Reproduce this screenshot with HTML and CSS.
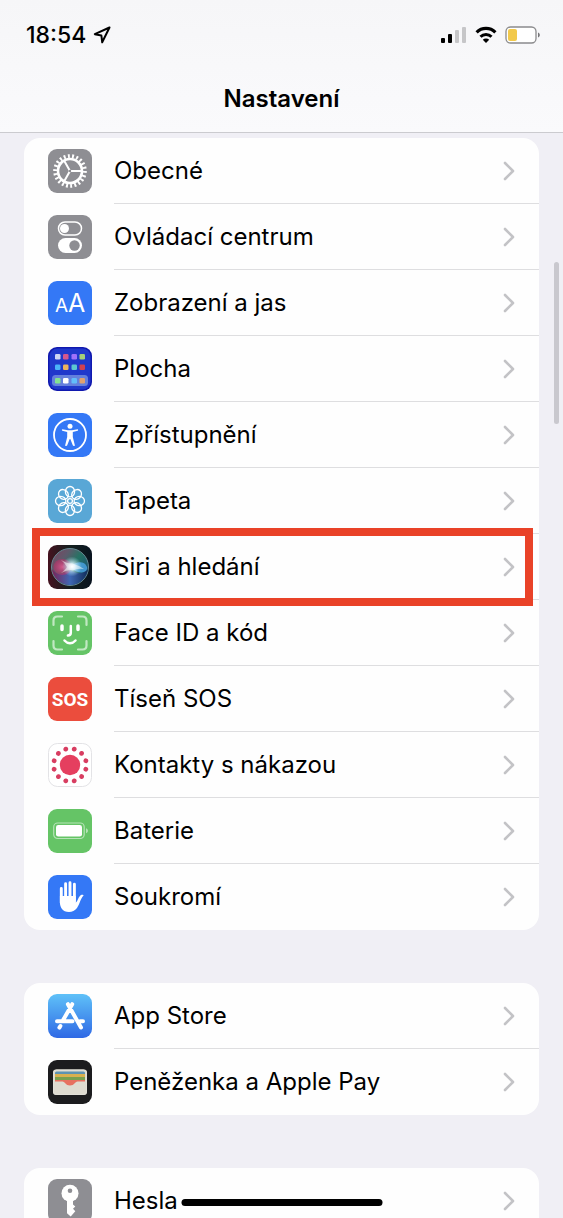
FILE: index.html
```html
<!DOCTYPE html>
<html lang="cs">
<head>
    <meta charset="UTF-8">
    <meta name="viewport" content="width=device-width, initial-scale=1.0">
    <title>Nastavení</title>
    <link rel="stylesheet" href="styles.css">
</head>
<body>
    <svg class="defs" aria-hidden="true">
        <symbol id="chevron" viewBox="0 0 12 20">
            <path d="M2 2l8 8-8 8" fill="none" stroke="#c3c3c6" stroke-width="2.6" stroke-linecap="round" stroke-linejoin="round"/>
        </symbol>
    </svg>

    <header class="header">
        <div class="status-bar">
            <div class="status-left">
                <span class="time">18:54</span>
                <svg width="18" height="18" viewBox="0 0 18 18">
                    <path d="M16.5 1.5L1.8 8.2l6.6 1.3.8 6.8z" fill="none" stroke="#000" stroke-width="2" stroke-linejoin="round"/>
                </svg>
            </div>
            <div class="status-right">
                <svg width="26" height="18" viewBox="0 0 26 18">
                    <rect x="0" y="12" width="4" height="5" rx="1"/>
                    <rect x="7" y="8" width="4" height="9" rx="1"/>
                    <rect x="14" y="4" width="4" height="13" rx="1" fill="#c6c6c8"/>
                    <rect x="21" y="1" width="4" height="16" rx="1" fill="#c6c6c8"/>
                </svg>
                <svg width="22" height="18" viewBox="0 0 22 18">
                    <path d="M1.6 6.3a13.4 13.4 0 0 1 18.8 0" fill="none" stroke="#000" stroke-width="3.2"/>
                    <path d="M5.5 10.8a7.8 7.8 0 0 1 11 0" fill="none" stroke="#000" stroke-width="3"/>
                    <path d="M11 17l-3.2-3.200a4.500 4.500 0 0 1 6.400 0z"/>
                </svg>
                <svg width="36" height="18" viewBox="0 0 36 18">
                    <rect x="1" y="1" width="30" height="16" rx="4.5" fill="#fff" stroke="#8b8b8d" stroke-width="1.3"/>
                    <rect x="3" y="3" width="9" height="12" rx="2" fill="#f2c94b"/>
                    <path d="M33 6.500c2.400.8 2.400 4.200 0 5z" fill="#77777a"/>
                </svg>
            </div>
        </div>
        <h1>Nastavení</h1>
    </header>

    <main class="content">
        <nav class="card">
            <a class="row" href="#obecne">
                <svg class="icon" viewBox="0 0 44 44">
                    <rect width="44" height="44" rx="9" fill="#8e8e93"/>
                    <g fill="none" stroke="#fff">
                        <circle cx="22" cy="22" r="12" stroke-width="2.6"/>
                        <circle cx="22" cy="22" r="14.8" stroke-width="4" pathLength="44" stroke-dasharray=".9 1.100"/>
                        <path d="M22 22h11M22 22l-5.800-10.200M22 22l-5.800 10.200" stroke-width="2"/>
                    </g>
                    <circle cx="22" cy="22" r="1.2" fill="#8e8e93"/>
                </svg>
                <span class="label">Obecné <svg class="chevron"><use href="#chevron"/></svg></span>
            </a>
            <a class="row" href="#ovladaci-centrum">
                <svg class="icon" viewBox="0 0 44 44">
                    <rect width="44" height="44" rx="9" fill="#8e8e93"/>
                    <rect x="10.500" y="7" width="23" height="13" rx="6.500" fill="none" stroke="#fff" stroke-width="1.500"/>
                    <circle cx="16.500" cy="13.500" r="4.500" fill="#fff"/>
                    <rect x="10" y="23" width="24" height="15" rx="7.500" fill="#fff"/>
                    <circle cx="26.500" cy="30.500" r="5.200" fill="#8e8e93"/>
                </svg>
                <span class="label">Ovládací centrum <svg class="chevron"><use href="#chevron"/></svg></span>
            </a>
            <a class="row" href="#zobrazeni">
                <svg class="icon" viewBox="0 0 44 44">
                    <rect width="44" height="44" rx="9" fill="#3478f6"/>
                    <text class="icon-aa" x="7" y="31" font-size="19">A</text>
                    <text class="icon-aa" x="20" y="31" font-size="25">A</text>
                </svg>
                <span class="label">Zobrazení a jas <svg class="chevron"><use href="#chevron"/></svg></span>
            </a>
            <a class="row" href="#plocha">
                <svg class="icon" viewBox="0 0 44 44">
                    <rect width="44" height="44" rx="9" fill="#1018ae"/>
                    <rect x="1.5" y="1.5" width="41" height="41" rx="8" fill="#2038cb"/>
                    <rect x="4" y="28" width="36" height="11" rx="3.500" fill="#6580dc"/>
                    <rect x="7" y="7" width="5.5" height="5.5" rx="1.300" fill="#ced5f3"/>
                    <rect x="15" y="7" width="5.5" height="5.5" rx="1.300" fill="#d5588e"/>
                    <rect x="23.500" y="7" width="5.5" height="5.5" rx="1.300" fill="#a071fa"/>
                    <rect x="31.5" y="7" width="5.5" height="5.5" rx="1.300" fill="#a5cf79"/>
                    <rect x="7" y="17.500" width="5.5" height="5.5" rx="1.300" fill="#4bb3f8"/>
                    <rect x="15" y="17.500" width="5.5" height="5.5" rx="1.300" fill="#edb35e"/>
                    <rect x="23.500" y="17.500" width="5.5" height="5.5" rx="1.300" fill="#5cc7d1"/>
                    <rect x="31.5" y="17.500" width="5.5" height="5.5" rx="1.300" fill="#d34150"/>
                    <rect x="7" y="31" width="5.5" height="5.5" rx="1.300" fill="#83e490"/>
                    <rect x="15" y="31" width="5.5" height="5.5" rx="1.300" fill="#fff"/>
                    <rect x="23.500" y="31" width="5.5" height="5.5" rx="1.300" fill="#62bdfa"/>
                    <rect x="31.5" y="31" width="5.5" height="5.5" rx="1.300" fill="#e0a16e"/>
                </svg>
                <span class="label">Plocha <svg class="chevron"><use href="#chevron"/></svg></span>
            </a>
            <a class="row" href="#zpristupneni">
                <svg class="icon" viewBox="0 0 44 44">
                    <rect width="44" height="44" rx="9" fill="#3478f6"/>
                    <circle cx="22" cy="22" r="16" fill="none" stroke="#fff" stroke-width="1.800"/>
                    <circle cx="22" cy="13.300" r="2.500" fill="#fff"/>
                    <path d="M14.300 16.200l5.700 1h4l5.700-1q1 .8 0 1.600l-4.900 1.300v5l2.100 8.300q-1 1.200-2 .2L22.300 26h-.6l-2.600 6.600q-1 1-2-.2l2.100-8.300v-5l-4.900-1.300q-1-.8 0-1.600z" fill="#fff"/>
                </svg>
                <span class="label">Zpřístupnění <svg class="chevron"><use href="#chevron"/></svg></span>
            </a>
            <a class="row" href="#tapeta">
                <svg class="icon" viewBox="0 0 44 44">
                    <rect width="44" height="44" rx="9" fill="#59a7d6"/>
                    <g fill="none" stroke="#fff" stroke-width="1.300">
                        <g id="petals">
                            <ellipse cx="22" cy="12.700" rx="4.600" ry="5.200"/>
                            <ellipse cx="22" cy="31.300" rx="4.600" ry="5.200"/>
                            <ellipse cx="12.700" cy="22" rx="5.200" ry="4.600"/>
                            <ellipse cx="31.300" cy="22" rx="5.200" ry="4.600"/>
                        </g>
                        <use href="#petals" transform="rotate(45 22 22)"/>
                        <circle cx="22" cy="22" r="2.400"/>
                    </g>
                </svg>
                <span class="label">Tapeta <svg class="chevron"><use href="#chevron"/></svg></span>
            </a>
            <a class="row highlighted" href="#siri">
                <svg class="icon" viewBox="0 0 44 44">
                    <defs>
                        <linearGradient id="siri-bg" x1="0" y1="0" x2="1" y2="0">
                            <stop offset="0" stop-color="#45121f"/>
                            <stop offset=".5" stop-color="#14201f"/>
                            <stop offset="1" stop-color="#08131f"/>
                        </linearGradient>
                        <linearGradient id="siri-orb" x1="0" y1=".1" x2="1" y2=".8">
                            <stop offset="0" stop-color="#7c4460"/>
                            <stop offset=".3" stop-color="#5d5a6b"/>
                            <stop offset=".55" stop-color="#267364"/>
                            <stop offset="1" stop-color="#174878"/>
                        </linearGradient>
                        <radialGradient id="siri-pink">
                            <stop offset="0" stop-color="#d5588c"/>
                            <stop offset="1" stop-color="#c22b67" stop-opacity=".5"/>
                        </radialGradient>
                        <radialGradient id="siri-glow">
                            <stop offset="0" stop-color="#fff"/>
                            <stop offset=".3" stop-color="#e5f7ff" stop-opacity=".85"/>
                            <stop offset="1" stop-color="#9bd7e8" stop-opacity="0"/>
                        </radialGradient>
                        <linearGradient id="siri-low" x1="0" y1="0" x2="1" y2="0">
                            <stop offset="0" stop-color="#7b2357"/>
                            <stop offset=".5" stop-color="#3f68b4"/>
                            <stop offset="1" stop-color="#102c58"/>
                        </linearGradient>
                    </defs>
                    <rect width="44" height="44" rx="9" fill="url(#siri-bg)"/>
                    <circle cx="22" cy="22" r="18.500" fill="url(#siri-orb)" stroke="#668993" stroke-width="1"/>
                    <path d="M4 24c6 8 12 5 18 1 6 3 12 6 18-1-1 9-9 16-18 16S5 33 4 24z" fill="url(#siri-low)"/>
                    <ellipse cx="14.500" cy="22" rx="9" ry="8" fill="url(#siri-pink)"/>
                    <path d="M23 21c5-4 13-6 16 1 1 6-8 8-16 1z" fill="#4fa9ed" opacity=".75"/>
                    <circle cx="24" cy="21.500" r="10" fill="url(#siri-glow)"/>
                    <path d="M13 15q7 4 11 3.500 6 1.500 12 5.500-7-1-11 1.500-4-1.500-12 2.500 5-4 6-6-2-4-6-7z" fill="#fff" opacity=".5"/>
                </svg>
                <span class="label">Siri a hledání <svg class="chevron"><use href="#chevron"/></svg></span>
            </a>
            <a class="row" href="#face-id">
                <svg class="icon" viewBox="0 0 44 44">
                    <rect width="44" height="44" rx="9" fill="#65c466"/>
                    <g fill="none" stroke-linecap="round">
                        <path d="M5.500 14v-4.500q0-4 4-4H14M30 5.500h4.500q4 0 4 4V14M38.500 30v4.500q0 4-4 4H30M14 38.500H9.500q-4 0-4-4V30" stroke="#c1e8c2" stroke-width="2.200"/>
                        <path d="M14 15v3.500M30 15v3.500" stroke="#fff" stroke-width="3.500"/>
                        <path d="M22.800 15v6.800q0 2.700-2.900 2.700M16.500 29.500c3 3.500 8 3.500 11 0" stroke="#fff" stroke-width="2.500"/>
                    </g>
                </svg>
                <span class="label">Face ID a kód <svg class="chevron"><use href="#chevron"/></svg></span>
            </a>
            <a class="row" href="#sos">
                <svg class="icon" viewBox="0 0 44 44">
                    <rect width="44" height="44" rx="9" fill="#eb4d3d"/>
                    <text class="icon-sos" x="22" y="29" text-anchor="middle">SOS</text>
                </svg>
                <span class="label">Tíseň SOS <svg class="chevron"><use href="#chevron"/></svg></span>
            </a>
            <a class="row" href="#kontakty">
                <svg class="icon" viewBox="0 0 44 44">
                    <rect x=".5" y=".5" width="43" height="43" rx="9" fill="#fff" stroke="#e3e3e6"/>
                    <circle cx="22" cy="22" r="10.200" fill="#e53f5f"/>
                    <circle cx="22" cy="22" r="16.400" fill="none" stroke="#d83d61" stroke-width="4.800" stroke-linecap="round" pathLength="12" stroke-dasharray="0 1" transform="rotate(15 22 22)"/>
                </svg>
                <span class="label">Kontakty s nákazou <svg class="chevron"><use href="#chevron"/></svg></span>
            </a>
            <a class="row" href="#baterie">
                <svg class="icon" viewBox="0 0 44 44">
                    <rect width="44" height="44" rx="9" fill="#65c466"/>
                    <rect x="5.700" y="14" width="30.500" height="15.500" rx="4" fill="none" stroke="#b5e3b6" stroke-width="1.200"/>
                    <rect x="8" y="16" width="26" height="11.500" rx="2.300" fill="#fff"/>
                    <path d="M38 19.300c2.600.8 2.600 4.200 0 5z" fill="#b5e3b6"/>
                </svg>
                <span class="label">Baterie <svg class="chevron"><use href="#chevron"/></svg></span>
            </a>
            <a class="row" href="#soukromi">
                <svg class="icon" viewBox="0 0 44 44">
                    <rect width="44" height="44" rx="9" fill="#3478f6"/>
                    <path d="M13.300 13.500V28M17.600 8.700V25M22 7.700V25M26.400 9.200V26" stroke="#fff" stroke-width="2.900" stroke-linecap="round"/>
                    <path d="M11.900 21h15.900v6.500c1.800-.5 2.600-6.200 5.200-7.500 1.300-.5 2.500-.3 2.600.6-3.300 3-3.600 8.400-6.600 12.400-2.200 2.800-4.800 4-8 4-6.500 0-9.100-4.600-9.100-10z" fill="#fff"/>
                </svg>
                <span class="label">Soukromí <svg class="chevron"><use href="#chevron"/></svg></span>
            </a>
        </nav>

        <nav class="card">
            <a class="row" href="#app-store">
                <svg class="icon" viewBox="0 0 44 44">
                    <defs>
                        <linearGradient id="store-bg" x1="0" y1="0" x2="0" y2="1">
                            <stop offset="0" stop-color="#5fc1f8"/>
                            <stop offset="1" stop-color="#2f69e5"/>
                        </linearGradient>
                    </defs>
                    <rect width="44" height="44" rx="9" fill="url(#store-bg)"/>
                    <g fill="none" stroke="#fff" stroke-width="4" stroke-linecap="round">
                        <path d="M9 27.300h15.500M32 27.300h3M24.200 10.200l-9.500 16.600M19.900 10.200L33 33.500M12.400 32l-1 1.600"/>
                    </g>
                </svg>
                <span class="label">App Store <svg class="chevron"><use href="#chevron"/></svg></span>
            </a>
            <a class="row" href="#penezenka">
                <svg class="icon" viewBox="0 0 44 44">
                    <rect width="44" height="44" rx="9" fill="#1c1c1e"/>
                    <rect x="5" y="9.500" width="34" height="25.500" rx="3" fill="#dedbd0"/>
                    <path d="M7 14.500v-1.500q0-1.500 1.500-1.500h27q1.500 0 1.500 1.500v1.500z" fill="#5d93b2"/>
                    <rect x="7" y="14" width="30" height="3" fill="#d9b04f"/>
                    <rect x="7" y="17" width="30" height="3.500" fill="#79a04f"/>
                    <path d="M7 20h30v1.500h-7.500c-2.500 0-3 4-7.500 4s-5-4-7.500-4H7z" fill="#e7705f"/>
                    <rect x="5.500" y="10" width="33" height="24.500" rx="3" fill="none" stroke="#e2e0d8"/>
                </svg>
                <span class="label">Peněženka a Apple Pay <svg class="chevron"><use href="#chevron"/></svg></span>
            </a>
        </nav>

        <nav class="card">
            <a class="row" href="#hesla">
                <svg class="icon" viewBox="0 0 44 44">
                    <rect width="44" height="44" rx="9" fill="#8e8e93"/>
                    <circle cx="22" cy="14.300" r="8.500" fill="#fff"/>
                    <path d="M19 21h6v4.500l2.300 2-2.300 2.300 2.300 2.500-4.600 5.200-3.700-3.200z" fill="#fff"/>
                    <circle cx="22" cy="11.800" r="2.300" fill="#8e8e93"/>
                </svg>
                <span class="label">Hesla <svg class="chevron"><use href="#chevron"/></svg></span>
            </a>
        </nav>
    </main>

    <div class="scroll-thumb"></div>
    <div class="home-indicator"></div>
</body>
</html>
```
FILE: styles.css
```css
:root {
    --background: #f0eff5;
    --card: #fefefe;
    --separator: #dedee0;
    --highlight: #e94228;
}

* {
    box-sizing: border-box;
}

body {
    margin: 0;
    height: 100vh;
    display: flex;
    flex-direction: column;
    overflow: hidden;
    background-color: var(--background);
    font-family: Inter, "Liberation Sans", sans-serif;
    color: #000;
}

svg {
    display: block;
    flex: none;
}

.defs {
    position: absolute;
    width: 0;
    height: 0;
}

/* Header */
.header {
    flex: none;
    padding-top: 20px;
    background: linear-gradient(#f6f6f8, #fafafc);
    border-bottom: 1px solid #cbcbcf;
}

.status-bar {
    display: flex;
    justify-content: space-between;
    align-items: center;
    height: 30px;
    padding: 0 22px 0 26px;
}

.status-left {
    display: flex;
    align-items: center;
    gap: 7px;
}

.status-right {
    display: flex;
    align-items: center;
    gap: 8px;
}

.time {
    font-size: 23px;
    font-weight: 500;
}

h1 {
    margin: 0;
    padding: 32px 0 16px;
    font-size: 24px;
    line-height: 34px;
    font-weight: 600;
    text-align: center;
}

/* Settings list */
.content {
    flex: 1;
    min-height: 0;
    overflow: hidden;
    display: flex;
    flex-direction: column;
    gap: 53px;
    padding: 5px 24px 0;
}

.card {
    flex: none;
    background-color: var(--card);
    border-radius: 16px;
}

.row {
    position: relative;
    display: flex;
    align-items: center;
    gap: 22px;
    height: 66px;
    padding-left: 24px;
    color: inherit;
    text-decoration: none;
}

.icon {
    width: 44px;
    height: 44px;
}

.icon-aa {
    fill: #fff;
    font-family: Inter, sans-serif;
}

.icon-sos {
    fill: #fff;
    font-family: Roboto, sans-serif;
    font-size: 19px;
    font-weight: 700;
}

.label {
    flex: 1;
    display: flex;
    align-items: center;
    justify-content: space-between;
    height: 66px;
    padding-right: 24px;
    border-bottom: 1px solid var(--separator);
    font-size: 24px;
}

.row:last-child .label {
    border-bottom-color: transparent;
}

.chevron {
    width: 12px;
    height: 20px;
}

/* Red frame drawn over the row */
.highlighted::after {
    content: "";
    position: absolute;
    z-index: 1;
    inset: -6px 6px -6px 8px;
    border: 8px solid var(--highlight);
}

.scroll-thumb {
    position: fixed;
    top: 262px;
    right: 4px;
    width: 5px;
    height: 162px;
    border-radius: 3px;
    background-color: #c9c8ce;
}

.home-indicator {
    position: fixed;
    bottom: 12px;
    left: 50%;
    width: 201px;
    height: 7px;
    border-radius: 4px;
    background-color: #000;
    transform: translateX(-50%);
}
```
